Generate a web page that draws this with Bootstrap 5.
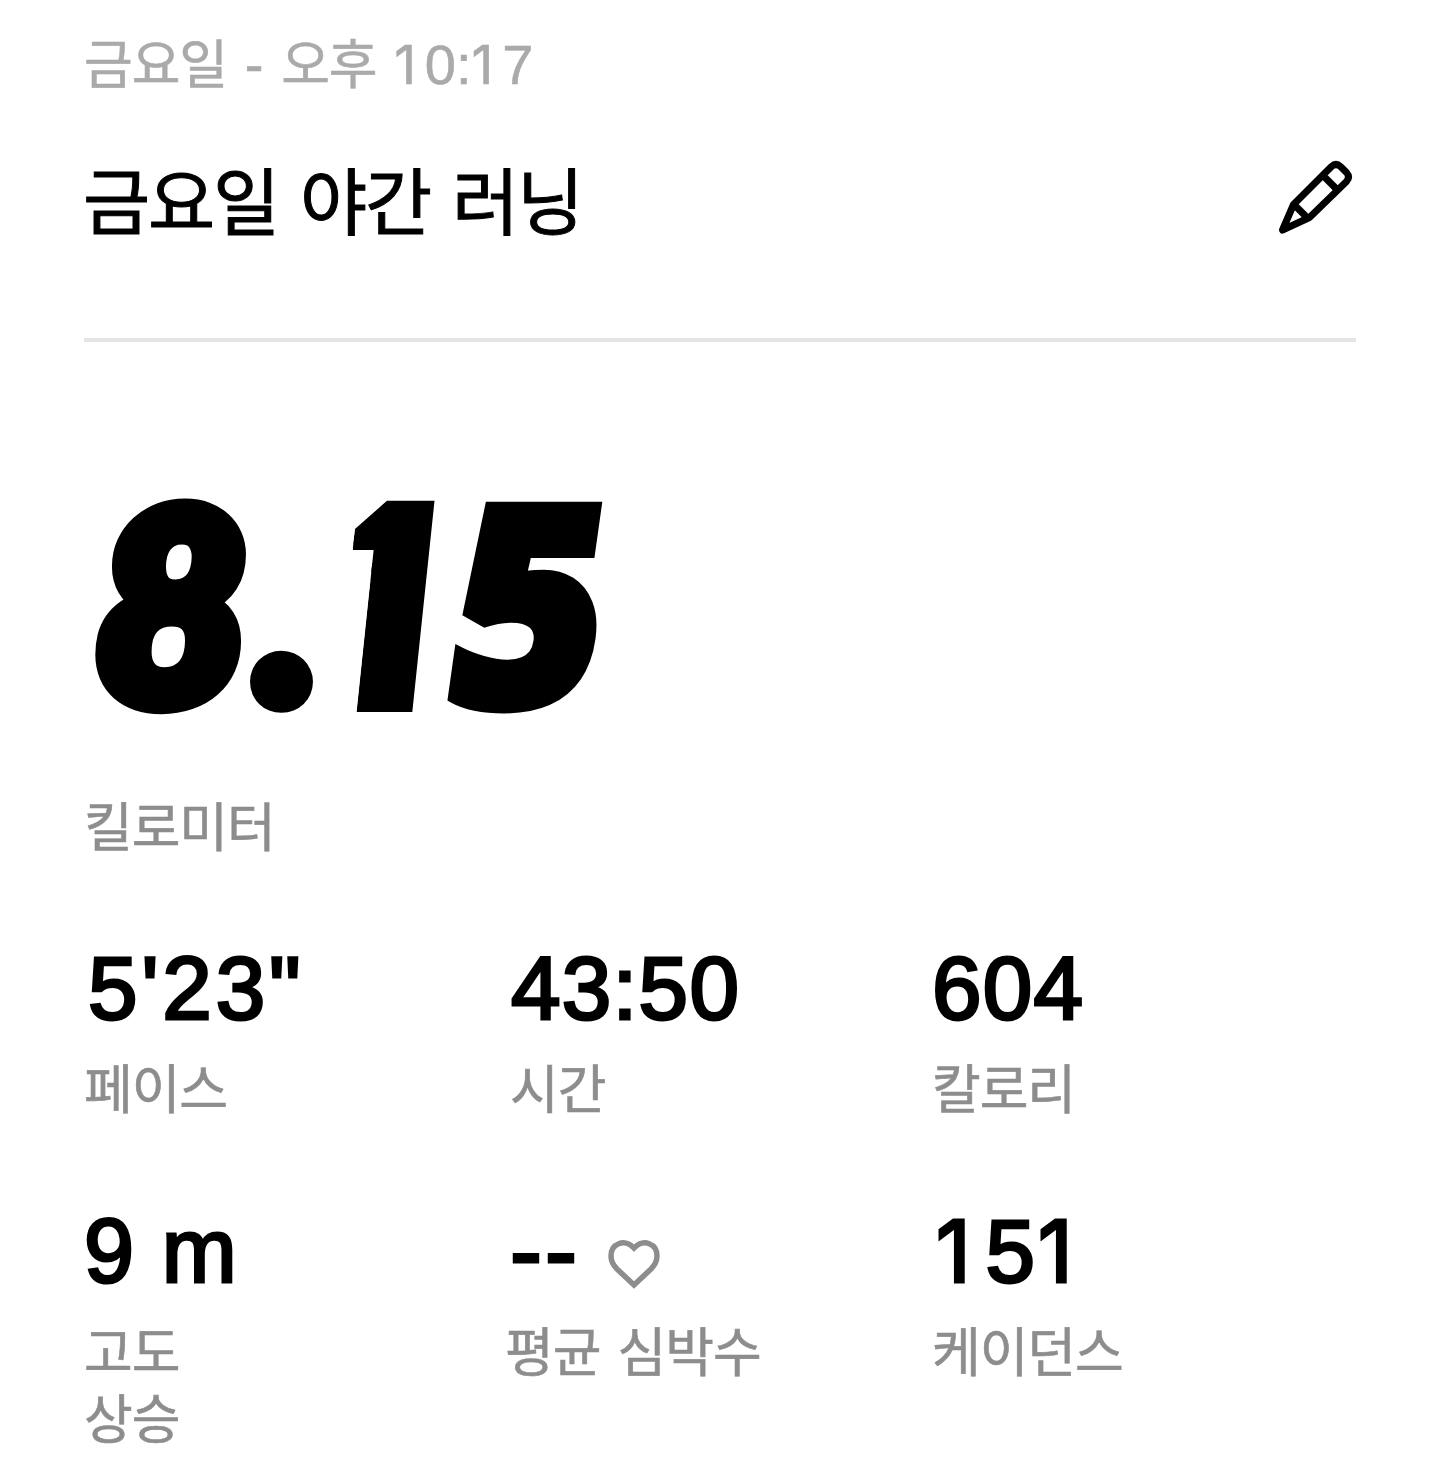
<!DOCTYPE html>
<html lang="ko">
<head>
<meta charset="utf-8">
<meta name="viewport" content="width=device-width, initial-scale=1">
<title>금요일 야간 러닝</title>
<link rel="stylesheet" href="https://cdn.jsdelivr.net/npm/bootstrap@5.3.0/dist/css/bootstrap.min.css">
<style>
  body { background: #fff; color: #000; font-family: "Liberation Sans", "Noto Sans CJK KR", sans-serif; }
  .run-page { height: 1467px; padding: 27px 84px 0; overflow: hidden; }
  .ko { font-family: "Noto Sans CJK KR", sans-serif; font-size: 53px; letter-spacing: -1.1px; word-spacing: 3.5px; line-height: 67px; white-space: nowrap; -webkit-text-stroke: .6px currentColor; }
  .run-date { height: 68px; color: #aaa; line-height: 68px; word-spacing: 4px; }
  .run-date .latin { font-family: "Liberation Sans", sans-serif; font-size: 56px; letter-spacing: 0; line-height: 1; }
  .flag-one { font-family: Inter, sans-serif; display: inline-block; width: .58em; font-size: .96em; letter-spacing: 0; line-height: 1; }
  .run-date .flag-one { width: .57em; }
  .run-head { height: 243px; padding-top: 49px; border-bottom: 4px solid #e5e5e5; margin-top: 4px; }
  .run-title { font-size: 73px; letter-spacing: -2.1px; line-height: 100px; font-weight: 400; margin: -1px 0 0 -1px; -webkit-text-stroke: 1px #000; }
  .edit-icon { margin-top: 8px; }
  .distance { height: 449px; padding-top: 108px; }
  .distance-num { font: 800 279px/300px "Open Sans", sans-serif; -webkit-text-stroke: 12px #000; height: 300px; }
  .distance-num span { display: inline-block; transform-origin: 0 80%; }
  .n-eight { font: italic 900 264px/300px Lato, sans-serif; width: 151px; margin-left: 11px; -webkit-text-stroke: 20px #000; }
  .n-dot { font: italic 900 264px/300px Lato, sans-serif; width: 92px; -webkit-text-stroke: 20px #000; transform: translate(11px, -1px); }
  .n-one { width: 112px; transform: translate(-36px, -2px) skewX(-6deg) scaleX(.84); clip-path: polygon(43px -10px, 170px -10px, 170px 310px, 68px 310px, 68px 102px, 43px 102px); }
  .n-five { transform: translate(-7px, -3px) skewX(-8deg) scale(.93, .99); }
  .unit { color: #8d8d8d; }
  .stats { margin-top: 80px; }
  .stat { height: 263px; }
  .stat-num { font-size: 89px; line-height: 100px; height: 115px; letter-spacing: 1.3px; -webkit-text-stroke: 3px #000; white-space: nowrap; }
  .pace { padding-left: 4px; letter-spacing: 3.9px; }
  .time { padding-left: 3px; }
  .climb { font-size: 90px; }
  .rate { padding-left: 2px; font-size: 96px; letter-spacing: 3px; }
  .rate-label { margin-left: -3px; }
  .time-label { margin-left: 2px; }
  .cadence { padding-left: 4px; letter-spacing: 3px; }
  .heart { margin: 38px 0 0 27px; }
</style>
<script src="https://cdn.jsdelivr.net/npm/bootstrap@5.3.0/dist/js/bootstrap.bundle.min.js"></script>
</head>
<body>
<main class="run-page">
  <div class="run-date ko">금요일 <span class="latin">-</span> 오후 <span class="latin"><span class="flag-one">1</span>0:<span class="flag-one">1</span>7</span></div>
  <header class="run-head d-flex justify-content-between align-items-start">
    <h1 class="run-title ko">금요일 야간 러닝</h1>
    <svg class="edit-icon" width="80" height="80" viewBox="0 0 80 80" fill="none" stroke="#000" stroke-width="7" stroke-linejoin="round"><path d="M6.500 74 17.500 48.500 55.500 10.500Q60 6.500 64.500 10.500L70.500 16.500Q74.500 21 70.500 25.500L33.500 61.500ZM17.500 48 32 62.500M46 18.500 62 34.500"/></svg>
  </header>
  <section class="distance"><div class="distance-num d-flex"><span class="n-eight">8</span><span class="n-dot">.</span><span class="n-one">1</span><span class="n-five">5</span></div></section>
  <div class="unit ko">킬로미터</div>
  <section class="row g-0 stats">
    <div class="col-4 stat"><div class="stat-num pace">5'23"</div><div class="unit ko">페이스</div></div>
    <div class="col-4 stat"><div class="stat-num time">43:50</div><div class="unit ko time-label">시간</div></div>
    <div class="col-4 stat"><div class="stat-num">604</div><div class="unit ko">칼로리</div></div>
    <div class="col-4 stat"><div class="stat-num climb">9 m</div><div class="unit ko">고도<br>상승</div></div>
    <div class="col-4 stat"><div class="stat-num rate d-flex align-items-start">--<svg class="heart" width="54" height="50" viewBox="0 0 54 50" fill="none" stroke="#8d8d8d" stroke-width="5.500"><path d="M27 9C17-1 4 5 4 17c0 6 2 9 6 13l17 16 17-16c4-4 6-7 6-13C50 5 37-1 27 9Z"/></svg></div><div class="unit ko rate-label">평균 심박수</div></div>
    <div class="col-4 stat"><div class="stat-num cadence"><span class="flag-one">1</span>5<span class="flag-one">1</span></div><div class="unit ko">케이던스</div></div>
  </section>
</main>
</body>
</html>
